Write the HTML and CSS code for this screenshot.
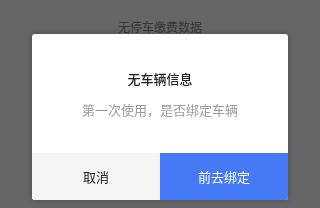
FILE: index.html
```html
<!DOCTYPE html>
<html lang="zh-CN">
<head>
    <meta charset="UTF-8">
    <meta name="viewport" content="width=device-width, initial-scale=1.0">
    <title>停车缴费</title>
    <link rel="stylesheet" href="styles.css">
</head>
<body>
    <div class="page">
        <p class="empty">无停车缴费数据</p>
    </div>

    <div class="mask">
        <div class="dialog">
            <div class="dialog-body">
                <h3 class="dialog-title">无车辆信息</h3>
                <p class="dialog-text">第一次使用，是否绑定车辆</p>
            </div>
            <div class="dialog-actions">
                <button class="btn btn-cancel">取消</button>
                <button class="btn btn-confirm">前去绑定</button>
            </div>
        </div>
    </div>
</body>
</html>
```

FILE: styles.css
```css
html, body {
    margin: 0;
    padding: 0;
    height: 100%;
}
body {
    font-family: "Noto Sans CJK SC", "Noto Sans", sans-serif;
    background-color: #666666;
}
.page {
    padding-top: 18px;
}
.empty {
    margin: 0;
    font-size: 12px;
    line-height: 18px;
    text-align: center;
    color: #363636;
}
.mask {
    position: fixed;
    top: 0;
    left: 0;
    right: 0;
    bottom: 0;
    display: flex;
    justify-content: center;
    align-items: flex-start;
    padding-top: 34px;
}
.dialog {
    width: 256px;
    background-color: #fff;
    border-radius: 3px;
    overflow: hidden;
    box-shadow: 0 0 6px rgba(0, 0, 0, 0.25);
}
.dialog-body {
    padding: 35px 16px 33px;
    text-align: center;
}
.dialog-title {
    margin: 0 0 11px;
    font-size: 13px;
    line-height: 20px;
    font-weight: 500;
    color: #222;
}
.dialog-text {
    margin: 0;
    font-size: 13px;
    line-height: 20px;
    color: #9a9a9a;
}
.dialog-actions {
    display: flex;
}
.btn {
    flex: 1;
    height: 47px;
    border: none;
    padding: 0;
    font-family: inherit;
    font-size: 13px;
    cursor: pointer;
}
.btn-cancel {
    background-color: #f5f5f5;
    color: #222;
}
.btn-confirm {
    background-color: #4579f5;
    color: #fff;
}
```
